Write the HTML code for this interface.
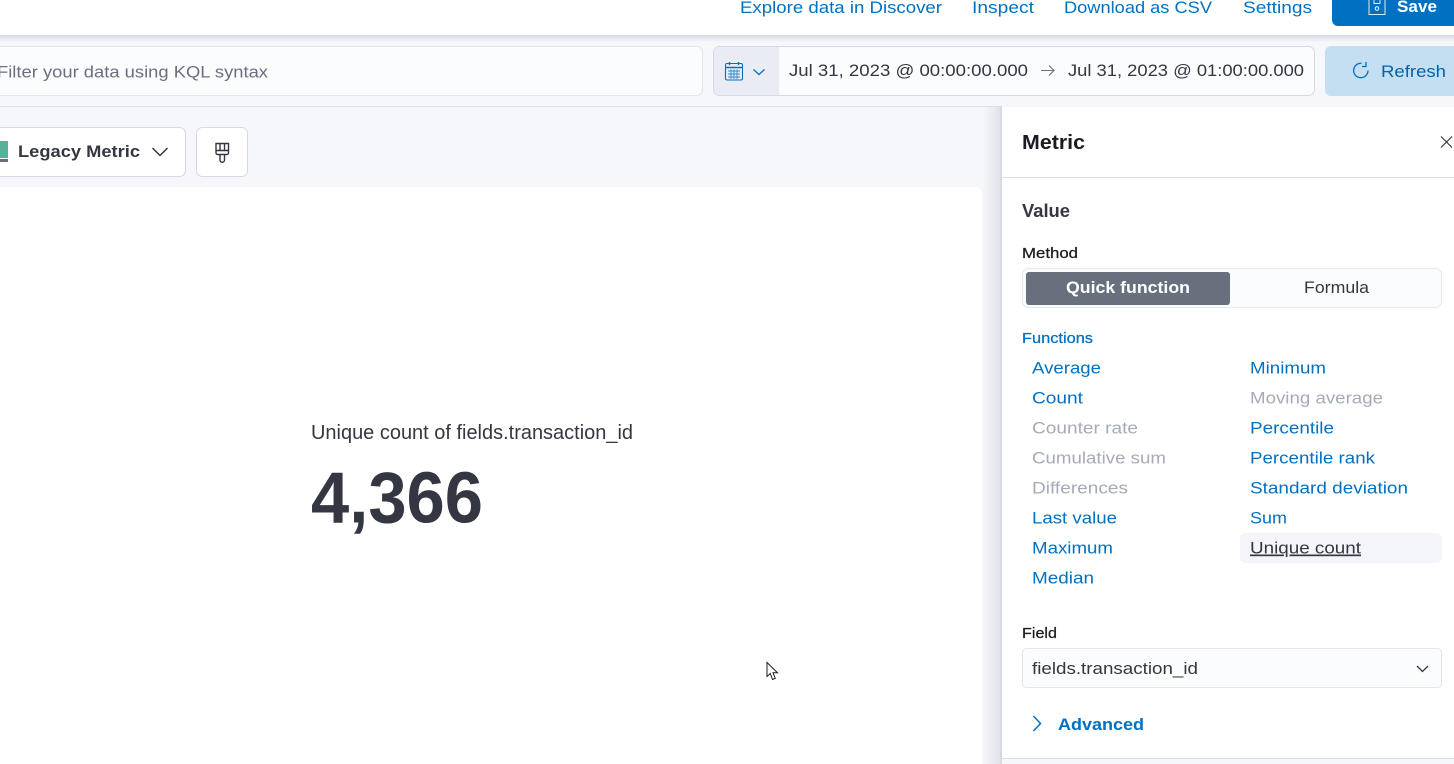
<!DOCTYPE html>
<html><head><meta charset="utf-8">
<style>
html,body{margin:0;padding:0;width:1454px;height:764px;overflow:hidden;background:#f5f7fa}
svg{position:absolute;left:0;top:0}
text{font-family:"Liberation Sans",sans-serif;font-size:17px}
.l{fill:#0071c2}.d{fill:#343741}.g{fill:#a5abb6}.b{font-weight:700}
</style></head><body>
<svg width="1454" height="764" viewBox="0 0 1454 764" xmlns="http://www.w3.org/2000/svg">
<defs>
<linearGradient id="s" x1="0" x2="1" y1="0" y2="0"><stop offset="0" stop-color="#e4e6ec" stop-opacity="0"/><stop offset="1" stop-color="#dcdfe6"/></linearGradient>
<linearGradient id="t" x1="0" x2="0" y1="0" y2="1"><stop offset="0" stop-color="#d5d8e0"/><stop offset="1" stop-color="#f5f7fa"/></linearGradient>
</defs>
<rect x="0" y="0" width="1454" height="764" fill="#f6f7fb"/>
<!-- top nav -->
<rect x="0" y="35" width="1454" height="7" fill="url(#t)"/>
<rect x="0" y="0" width="1454" height="35" fill="#fff"/>
<text class="l" x="740" y="13" textLength="202" lengthAdjust="spacingAndGlyphs">Explore data in Discover</text>
<text class="l" x="972" y="13" textLength="62" lengthAdjust="spacingAndGlyphs">Inspect</text>
<text class="l" x="1064" y="13" textLength="148" lengthAdjust="spacingAndGlyphs">Download as CSV</text>
<text class="l" x="1243" y="13" textLength="69" lengthAdjust="spacingAndGlyphs">Settings</text>
<path d="M1332 0H1460V26H1338a6 6 0 0 1-6-6Z" fill="#0071c2"/>
<path d="M1369 -2V14.500H1385V-2M1374 -2V3.500H1380V-2" fill="none" stroke="#fff" stroke-opacity=".85" stroke-width="1"/>
<circle cx="1377" cy="8.500" r="1.800" fill="none" stroke="#fff" stroke-width="1"/>
<text class="b" x="1397" y="12" fill="#fff" textLength="40" lengthAdjust="spacingAndGlyphs">Save</text>
<!-- query bar -->
<rect x="-8" y="46.500" width="710.500" height="49" rx="6" fill="#fbfcfe" stroke="#e1e5ee"/>
<text x="-3" y="77.500" fill="#69707d" textLength="271" lengthAdjust="spacingAndGlyphs">Filter your data using KQL syntax</text>
<!-- date picker -->
<rect x="713.500" y="46.500" width="601" height="49" rx="6" fill="#fbfcfe" stroke="#d3dae6"/>
<path d="M779 47H720a6 6 0 0 0-6 6V89a6 6 0 0 0 6 6H779Z" fill="#e9edf3"/>
<g fill="none" stroke="#0071c2" stroke-width="1.100">
<rect x="725.500" y="63.500" width="17" height="16.500" rx="1.500"/>
<path d="M725.500 67.500H742.500M729.500 62V65M738.500 62V65" stroke-width="1.400"/>
<path d="M728 71H740M728 74H740M728 77H740M731 69.500V79M734 69.500V79M737 69.500V79" stroke-width=".9" stroke-opacity=".8"/>
<path d="M753.500 69.500L759 74.500L764.500 69.500" stroke-width="1.300"/>
</g>
<text class="d" x="789" y="76" textLength="239" lengthAdjust="spacingAndGlyphs">Jul 31, 2023 @ 00:00:00.000</text>
<path d="M1041 70.500H1054M1049 65.500L1054 70.500L1049 75.500" fill="none" stroke="#69707d" stroke-width="1.100"/>
<text class="d" x="1068" y="76" textLength="236" lengthAdjust="spacingAndGlyphs">Jul 31, 2023 @ 01:00:00.000</text>
<!-- refresh -->
<path d="M1460 46H1331a6 6 0 0 0-6 6V90a6 6 0 0 0 6 6H1460Z" fill="#c5dff2"/>
<path d="M1368 70.500A7.200 7.200 0 1 1 1361.500 63.300M1366 62V66.500H1362" fill="none" stroke="#0071c2" stroke-width="1.300"/>
<text class="l" x="1381" y="77" textLength="65" lengthAdjust="spacingAndGlyphs" style="fill:#0063aa">Refresh</text>
<rect x="0" y="106" width="1002" height="1" fill="#d8dde8"/>
<!-- toolbar -->
<rect x="-10" y="127.500" width="195.500" height="49" rx="6" fill="#fff" stroke="#d3dae6"/>
<rect x="0" y="141" width="8" height="17" fill="#54b399"/>
<rect x="0" y="159" width="8" height="3" fill="#69707d"/>
<text class="d b" x="18" y="157" textLength="122" lengthAdjust="spacingAndGlyphs">Legacy Metric</text>
<path d="M152.500 148L160 155.500L167.500 148" fill="none" stroke="#343741" stroke-width="1.500"/>
<rect x="196.500" y="127.500" width="51" height="49" rx="6" fill="#fff" stroke="#d3dae6"/>
<path d="M216 143.500H228.500V153a1.500 1.500 0 0 1-1.500 1.500H217.500a1.500 1.500 0 0 1-1.500-1.500ZM216 150.500H228.500M220 143.500V150M224.500 143.500V150M220 154.500V160a2.200 2.200 0 0 0 4.500 0V154.500" fill="none" stroke="#343741" stroke-width="1.400"/>
<!-- canvas -->
<rect x="982" y="107" width="20" height="657" fill="url(#s)"/>
<rect x="-10" y="187" width="992" height="590" rx="6" fill="#fff"/>
<text x="311" y="439" style="font-size:20px" fill="#343741" textLength="322" lengthAdjust="spacingAndGlyphs">Unique count of fields.transaction_id</text>
<text class="b" x="311" y="522.500" style="font-size:72px" fill="#343741" textLength="172" lengthAdjust="spacingAndGlyphs">4,366</text>
<!-- cursor -->
<path d="M767 662.500V676.500L770.300 673.500L772.500 679.500L775.300 678.300L773 672.800H777.500Z" fill="#fff" stroke="#1a1c21" stroke-width="1"/>
<!-- panel -->
<rect x="1002" y="107" width="452" height="657" fill="#fff"/>
<text class="b" x="1022" y="149" style="font-size:20px" fill="#1a1c21" textLength="63" lengthAdjust="spacingAndGlyphs">Metric</text>
<path d="M1441 136.500L1452 147.500M1452 136.500L1441 147.500" fill="none" stroke="#343741" stroke-width="1.200"/>
<rect x="1002" y="177" width="452" height="1" fill="#d8dde8"/>
<text class="d b" x="1022" y="217" style="font-size:18px" textLength="48" lengthAdjust="spacingAndGlyphs">Value</text>
<text x="1022" y="258" style="font-size:15px;font-weight:400;stroke:#1a1c21;stroke-width:.25" fill="#1a1c21" textLength="56" lengthAdjust="spacingAndGlyphs">Method</text>
<rect x="1022.500" y="268.500" width="419" height="39" rx="6" fill="#fbfcfe" stroke="#e4e8f0"/>
<rect x="1026" y="272" width="204" height="33" rx="3" fill="#69707d"/>
<text class="b" x="1066" y="293" fill="#fff" textLength="124" lengthAdjust="spacingAndGlyphs">Quick function</text>
<text class="d" x="1304" y="293" textLength="65" lengthAdjust="spacingAndGlyphs">Formula</text>
<text x="1022" y="343" style="font-size:15px;stroke:#0071c2;stroke-width:.25" fill="#0071c2" textLength="71" lengthAdjust="spacingAndGlyphs">Functions</text>
<text class="l" x="1032" y="373.500" textLength="69" lengthAdjust="spacingAndGlyphs">Average</text>
<text class="l" x="1032" y="403.500" textLength="51" lengthAdjust="spacingAndGlyphs">Count</text>
<text class="g" x="1032" y="433.500" textLength="106" lengthAdjust="spacingAndGlyphs">Counter rate</text>
<text class="g" x="1032" y="463.500" textLength="134" lengthAdjust="spacingAndGlyphs">Cumulative sum</text>
<text class="g" x="1032" y="493.500" textLength="96" lengthAdjust="spacingAndGlyphs">Differences</text>
<text class="l" x="1032" y="523.500" textLength="85" lengthAdjust="spacingAndGlyphs">Last value</text>
<text class="l" x="1032" y="553.500" textLength="81" lengthAdjust="spacingAndGlyphs">Maximum</text>
<text class="l" x="1032" y="583.500" textLength="62" lengthAdjust="spacingAndGlyphs">Median</text>
<text class="l" x="1250" y="373.500" textLength="76" lengthAdjust="spacingAndGlyphs">Minimum</text>
<text class="g" x="1250" y="403.500" textLength="133" lengthAdjust="spacingAndGlyphs">Moving average</text>
<text class="l" x="1250" y="433.500" textLength="84" lengthAdjust="spacingAndGlyphs">Percentile</text>
<text class="l" x="1250" y="463.500" textLength="125" lengthAdjust="spacingAndGlyphs">Percentile rank</text>
<text class="l" x="1250" y="493.500" textLength="158" lengthAdjust="spacingAndGlyphs">Standard deviation</text>
<text class="l" x="1250" y="523.500" textLength="37" lengthAdjust="spacingAndGlyphs">Sum</text>
<rect x="1240" y="533" width="202" height="30" rx="6" fill="#f3f5f9"/>
<text class="d" x="1250" y="553.500" text-decoration="underline" textLength="111" lengthAdjust="spacingAndGlyphs">Unique count</text>
<text x="1022" y="638" style="font-size:15px;stroke:#1a1c21;stroke-width:.25" fill="#1a1c21" textLength="35" lengthAdjust="spacingAndGlyphs">Field</text>
<rect x="1022.500" y="648.500" width="419" height="39" rx="4" fill="#fbfcfe" stroke="#e0e5ee"/>
<text class="d" x="1032" y="674" textLength="166" lengthAdjust="spacingAndGlyphs">fields.transaction_id</text>
<path d="M1417 666L1422.500 671.500L1428 666" fill="none" stroke="#343741" stroke-width="1.300"/>
<path d="M1033.500 716L1040.500 723.500L1033.500 731" fill="none" stroke="#0071c2" stroke-width="1.500"/>
<text class="b" x="1058" y="730" fill="#0071c2" textLength="86" lengthAdjust="spacingAndGlyphs">Advanced</text>
<rect x="1002" y="758" width="452" height="6" fill="#f5f7fa"/>
<rect x="1002" y="758" width="452" height="1" fill="#d8dde8"/>
<rect x="1000" y="107" width="2" height="657" fill="#d8dae2"/>
</svg>
</body></html>
